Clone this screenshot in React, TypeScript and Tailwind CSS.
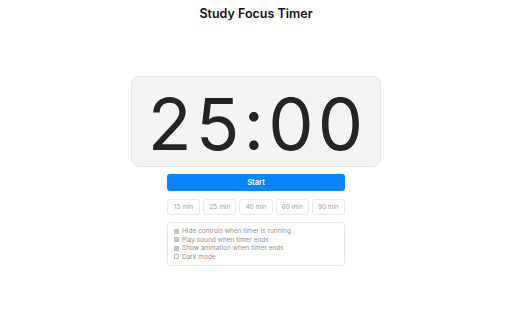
import { useState } from 'react';

const presets = [15, 25, 40, 60, 90];

const options = [
  { id: 'hide', label: 'Hide controls when timer is running', checked: true },
  { id: 'sound', label: 'Play sound when timer ends', checked: true },
  { id: 'anim', label: 'Show animation when timer ends', checked: true },
  { id: 'dark', label: 'Dark mode', checked: false },
];

export default function App() {
  const [minutes, setMinutes] = useState(25);
  const [opts, setOpts] = useState(options);

  const toggle = (id: string) => {
    setOpts(prev => prev.map(o => (o.id === id ? { ...o, checked: !o.checked } : o)));
  };

  return (
    <div
      className="w-[512px] h-[320px] bg-white flex flex-col items-center text-[#222]"
      style={{ fontFamily: 'Inter, "Liberation Sans", Arial, sans-serif' }}
    >
      <h1 className="mt-[6px] text-[12.5px] leading-[16px] font-semibold text-[#111]">Study Focus Timer</h1>

      <div className="mt-[54px] w-[250px] h-[91px] rounded-[8px] border border-[#e3e3e3] bg-[#f4f4f4] flex items-center justify-center pt-[4px] pl-[3px]">
        <span className="text-[72px] leading-none font-normal tracking-[4px] text-[#242424]">
          {String(minutes).padStart(2, '0')}:00
        </span>
      </div>

      <div className="mt-[7px] w-[178px] flex flex-col">
        <button className="h-[17px] rounded-[3px] bg-[#0a84ff] text-white text-[7.5px] font-semibold leading-none">
          Start
        </button>

        <div className="mt-[8px] flex gap-[3px]">
          {presets.map(p => (
            <button
              key={p}
              onClick={() => setMinutes(p)}
              className="flex-1 h-[16px] rounded-[3px] border border-[#e8e8e8] bg-white text-[6.5px] leading-none text-[#9a9a9a]"
            >
              {p} min
            </button>
          ))}
        </div>

        <div className="mt-[7px] h-[44px] rounded-[3px] border border-[#e8e8e8] px-[6px] py-[4px] flex flex-col">
          {opts.map(o => (
            <label key={o.id} className="flex items-center gap-[3px] h-[8.7px] text-[6.5px] text-[#8f8f8f] leading-none">
              <span
                onClick={() => toggle(o.id)}
                className={
                  o.checked
                    ? 'w-[5px] h-[5px] rounded-[1px] border border-[#b5b5b5] bg-[#d6d6d6] flex items-center justify-center'
                    : 'w-[5px] h-[5px] rounded-[1px] border border-[#b5b5b5] bg-white'
                }
              >
                {o.checked && (
                  <svg viewBox="0 0 10 10" className="w-[4px] h-[4px]">
                    <path d="M2 5.2 L4.2 7.4 L8 2.8" fill="none" stroke="#777" strokeWidth="1.6" />
                  </svg>
                )}
              </span>
              {o.label}
            </label>
          ))}
        </div>
      </div>
    </div>
  );
}
